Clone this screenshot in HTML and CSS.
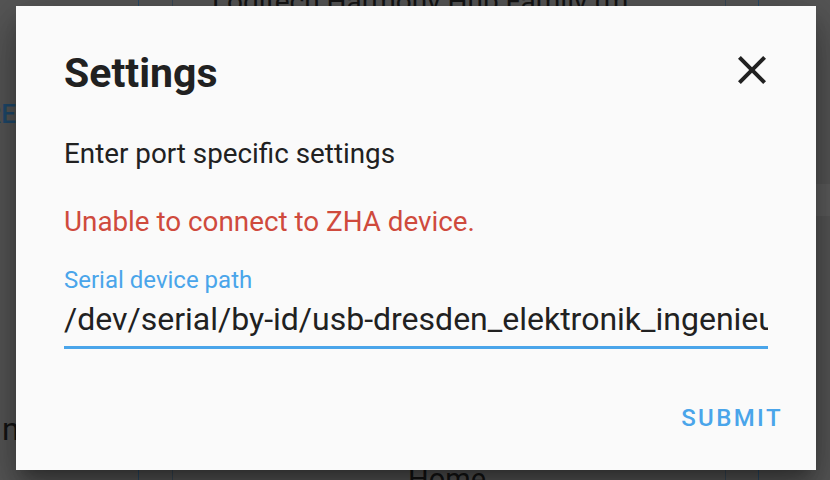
FILE: index.html
```html
<!DOCTYPE html>
<html lang="en">
<head>
<meta charset="utf-8">
<title>Settings</title>
<link rel="stylesheet" href="styles.css">
</head>
<body>
<div class="page">
  <div class="bg">
    <div class="bg-title">Logitech Harmony Hub Family (m</div>
    <div class="bg-re"><span>RE</span></div>
    <div class="bg-rule"></div>
    <div class="bg-n">n</div>
    <div class="bg-home">Home</div>
  </div>
  <div class="dialog" role="dialog">
    <div class="dialog-header">
      <h2 class="dialog-title">Settings</h2>
      <button class="close-btn" aria-label="Close">
        <svg viewBox="0 0 24 24" width="48" height="48"><path d="M19 6.41L17.59 5 12 10.59 6.41 5 5 6.41 10.59 12 5 17.59 6.41 19 12 13.41 17.59 19 19 17.59 13.41 12z" fill="#212121"/></svg>
      </button>
    </div>
    <p class="dialog-text">Enter port specific settings</p>
    <p class="dialog-error">Unable to connect to ZHA device.</p>
    <div class="field">
      <label class="field-label">Serial device path</label>
      <div class="field-input">/dev/serial/by-id/usb-dresden_elektronik_ingenieurtechnik_GmbH_ConBee_II</div>
    </div>
    <div class="actions">
      <button class="submit-btn">Submit</button>
    </div>
  </div>
</div>
</body>
</html>
```

FILE: styles.css
```css
* { box-sizing: border-box; }
html, body { margin: 0; padding: 0; }
body {
  font-family: Roboto, "Noto Sans", sans-serif;
  background: #585858;
}
.page {
  position: relative;
  width: 830px;
  height: 480px;
  overflow: hidden;
}
.bg {
  height: 480px;
  background:
    linear-gradient(#2b4c68, #2b4c68) 138px 0 / 1px 100% no-repeat,
    linear-gradient(#3a4a58, #3a4a58) 172px 0 / 1px 100% no-repeat,
    linear-gradient(#3a4a58, #3a4a58) 725px 0 / 1px 100% no-repeat,
    linear-gradient(#2b4c68, #2b4c68) 758px 0 / 1px 100% no-repeat,
    linear-gradient(#5e5e5e, #5e5e5e) 758px 184px / 72px 32px no-repeat,
    #575757;
  color: #141414;
  display: flex;
  flex-direction: column;
}
.bg-title {
  margin-top: -14px;
  padding-left: 212px;
  font-size: 28px;
  line-height: 32px;
  white-space: nowrap;
}
.bg-re {
  margin-top: 82px;
  width: 16px;
  display: flex;
  justify-content: flex-end;
  font-size: 26px;
  line-height: 28px;
  font-weight: 500;
  letter-spacing: 0;
  color: #1f4a6d;
  white-space: nowrap;
}
.bg-rule {
  margin-top: 54px;
  height: 2px;
  background: #1c4467;
}
.bg-n {
  margin-top: 228px;
  padding-left: 2px;
  font-size: 32px;
  line-height: 38px;
}
.bg-home {
  margin-top: 15px;
  padding-left: 408px;
  font-size: 29px;
  line-height: 32px;
}
.dialog {
  position: absolute;
  left: 16px;
  top: 6px;
  width: 800px;
  height: 464px;
  background: #fafafa;
  padding: 0 48px;
  box-shadow: 0 11px 15px -7px rgba(0,0,0,.3), 0 24px 38px 3px rgba(0,0,0,.2), 0 9px 46px 8px rgba(0,0,0,.18);
  display: flex;
  flex-direction: column;
}
.dialog-header {
  margin-top: 43px;
  display: flex;
  justify-content: space-between;
  align-items: flex-start;
}
.dialog-title {
  margin: 0;
  font-size: 41px;
  line-height: 48px;
  font-weight: 700;
  color: #212121;
}
.close-btn {
  margin: -3px -8px 0 0;
  padding: 0;
  border: 0;
  background: none;
  width: 48px;
  height: 48px;
  display: block;
}
.close-btn svg { display: block; }
.dialog-text {
  margin: 41px 0 0;
  font-size: 27.8px;
  line-height: 32px;
  color: #212121;
}
.dialog-error {
  margin: 36px 0 0;
  font-size: 27.8px;
  line-height: 32px;
  color: #cf4a3d;
}
.field {
  margin-top: 28px;
  display: flex;
  flex-direction: column;
}
.field-label {
  font-size: 24px;
  line-height: 28px;
  color: #4aa5ea;
}
.field-input {
  margin-top: 7px;
  font-size: 32px;
  line-height: 36px;
  color: #212121;
  white-space: nowrap;
  overflow: hidden;
  padding-bottom: 9px;
  border-bottom: 3px solid #4aa5ea;
}
.actions {
  margin-top: 55px;
  margin-right: -15px;
  display: flex;
  justify-content: flex-end;
}
.submit-btn {
  padding: 0;
  border: 0;
  background: none;
  font-family: Roboto, sans-serif;
  font-size: 24px;
  line-height: 28px;
  font-weight: 500;
  letter-spacing: 2.4px;
  text-transform: uppercase;
  color: #4aa5ea;
}
```
